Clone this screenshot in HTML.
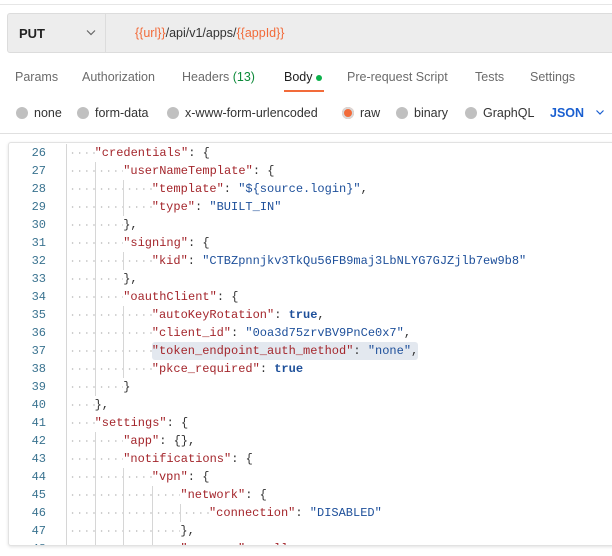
<!DOCTYPE html>
<html><head><style>
*{margin:0;padding:0;box-sizing:border-box}
body{width:612px;height:556px;background:#fff;font-family:"Liberation Sans",sans-serif;position:relative;overflow:hidden;color:#212121}
.abs{position:absolute}
.topline{left:0;right:0;top:4px;height:1px;background:#e6e6e6}
.url{left:7px;top:13px;width:620px;height:40px;background:#ededed;border:1px solid #dcdcdc;border-radius:3px}
.url .div{position:absolute;left:97px;top:0;bottom:0;width:1px;background:#dcdcdc}
.put{left:19px;top:26px;font-size:13px;font-weight:bold;color:#222}
.urltxt{left:135px;top:26px;font-size:12.5px;color:#333}
.o{color:#f26b3a}
.tabs{top:70px;font-size:12.5px;color:#6b6b6b}
.g{color:#0e8a3a}
.ul{left:242px;top:90px;width:34px;height:2px;background:#f26b3a}
.radio{top:106px;font-size:12.5px;color:#333;display:flex;align-items:center}
.rb{width:12px;height:12px;border-radius:50%;background:#c0c0c0;margin-right:6px}
.sep{left:0;right:0;top:133px;height:1px;background:#e0e0e0}
.editor{left:8px;top:142px;width:620px;height:404px;border:1px solid #e2e2e2;border-radius:3px;box-shadow:0 1px 3px rgba(0,0,0,.12);background:#fff;overflow:hidden}
.code{position:absolute;left:0;top:1px;font-family:"Liberation Mono",monospace;font-size:12px;}
.ln{position:relative;height:18px;line-height:18px;white-space:pre}
.num{position:absolute;left:0;width:37px;text-align:right;color:#3a7390;font-size:12px}
.in{position:absolute;left:57px;top:0;height:18px;display:flex}
.lv{width:28.6px;height:18px;border-left:1px solid #d6d6d6;background-image:radial-gradient(circle,#b8b8b8 0.7px,transparent 0.9px);background-size:7.15px 18px;background-position:2px 0}
.t{line-height:18px;color:#333}
.k{color:#a4262c}
.s{color:#1d4f9a}
.b{color:#1d4f9a;font-weight:bold}
.hl{background:#e3e8ef;border-radius:3px}
</style></head><body>
<div class="abs topline"></div>
<div class="abs url"><div class="div"></div></div>
<div class="abs put">PUT</div>
<svg class="abs" style="left:86px;top:29px" width="10" height="7" viewBox="0 0 10 7"><path d="M1 1.5l4 4 4-4" fill="none" stroke="#666" stroke-width="1.2"/></svg>
<div class="abs urltxt"><span class="o">{{url}}</span>/api/v1/apps/<span class="o">{{appId}}</span></div>

<div class="abs tabs" style="left:15px">Params</div>
<div class="abs tabs" style="left:82px">Authorization</div>
<div class="abs tabs" style="left:182px">Headers <span class="g">(13)</span></div>
<div class="abs tabs" style="left:284px;color:#212121">Body</div>
<div class="abs" style="left:316px;top:75px;width:6px;height:6px;border-radius:50%;background:#0cb14b"></div>
<div class="abs tabs" style="left:347px">Pre-request Script</div>
<div class="abs tabs" style="left:475px">Tests</div>
<div class="abs tabs" style="left:530px">Settings</div>
<div class="abs ul" style="left:284px;width:40px"></div>

<div class="abs radio" style="left:16px"><span class="rb"></span>none</div>
<div class="abs radio" style="left:77px"><span class="rb"></span>form-data</div>
<div class="abs radio" style="left:167px"><span class="rb"></span>x-www-form-urlencoded</div>
<div class="abs radio" style="left:342px"><span class="rb" style="background:#f26b3a;box-shadow:inset 0 0 0 2px #d8d8d8"></span>raw</div>
<div class="abs radio" style="left:396px"><span class="rb"></span>binary</div>
<div class="abs radio" style="left:465px"><span class="rb"></span>GraphQL</div>
<div class="abs radio" style="left:550px;color:#1a5fd0;font-weight:bold">JSON</div>
<svg class="abs" style="left:595px;top:109px" width="10" height="7" viewBox="0 0 10 7"><path d="M1.5 1.5l3.5 3.5 3.5-3.5" fill="none" stroke="#1a5fd0" stroke-width="1.2"/></svg>
<div class="abs sep"></div>

<div class="abs editor"><div class="code">
<div class="ln"><span class="num">26</span><div class="in"><span class="lv"></span><span class="t"><span class="k">"credentials"</span>: {</span></div></div>
<div class="ln"><span class="num">27</span><div class="in"><span class="lv"></span><span class="lv"></span><span class="t"><span class="k">"userNameTemplate"</span>: {</span></div></div>
<div class="ln"><span class="num">28</span><div class="in"><span class="lv"></span><span class="lv"></span><span class="lv"></span><span class="t"><span class="k">"template"</span>: <span class="s">"${source.login}"</span>,</span></div></div>
<div class="ln"><span class="num">29</span><div class="in"><span class="lv"></span><span class="lv"></span><span class="lv"></span><span class="t"><span class="k">"type"</span>: <span class="s">"BUILT_IN"</span></span></div></div>
<div class="ln"><span class="num">30</span><div class="in"><span class="lv"></span><span class="lv"></span><span class="t">},</span></div></div>
<div class="ln"><span class="num">31</span><div class="in"><span class="lv"></span><span class="lv"></span><span class="t"><span class="k">"signing"</span>: {</span></div></div>
<div class="ln"><span class="num">32</span><div class="in"><span class="lv"></span><span class="lv"></span><span class="lv"></span><span class="t"><span class="k">"kid"</span>: <span class="s">"CTBZpnnjkv3TkQu56FB9maj3LbNLYG7GJZjlb7ew9b8"</span></span></div></div>
<div class="ln"><span class="num">33</span><div class="in"><span class="lv"></span><span class="lv"></span><span class="t">},</span></div></div>
<div class="ln"><span class="num">34</span><div class="in"><span class="lv"></span><span class="lv"></span><span class="t"><span class="k">"oauthClient"</span>: {</span></div></div>
<div class="ln"><span class="num">35</span><div class="in"><span class="lv"></span><span class="lv"></span><span class="lv"></span><span class="t"><span class="k">"autoKeyRotation"</span>: <span class="b">true</span>,</span></div></div>
<div class="ln"><span class="num">36</span><div class="in"><span class="lv"></span><span class="lv"></span><span class="lv"></span><span class="t"><span class="k">"client_id"</span>: <span class="s">"0oa3d75zrvBV9PnCe0x7"</span>,</span></div></div>
<div class="ln"><span class="num">37</span><div class="in"><span class="lv"></span><span class="lv"></span><span class="lv"></span><span class="t hl"><span class="k">"token_endpoint_auth_method"</span>: <span class="s">"none"</span>,</span></div></div>
<div class="ln"><span class="num">38</span><div class="in"><span class="lv"></span><span class="lv"></span><span class="lv"></span><span class="t"><span class="k">"pkce_required"</span>: <span class="b">true</span></span></div></div>
<div class="ln"><span class="num">39</span><div class="in"><span class="lv"></span><span class="lv"></span><span class="t">}</span></div></div>
<div class="ln"><span class="num">40</span><div class="in"><span class="lv"></span><span class="t">},</span></div></div>
<div class="ln"><span class="num">41</span><div class="in"><span class="lv"></span><span class="t"><span class="k">"settings"</span>: {</span></div></div>
<div class="ln"><span class="num">42</span><div class="in"><span class="lv"></span><span class="lv"></span><span class="t"><span class="k">"app"</span>: {},</span></div></div>
<div class="ln"><span class="num">43</span><div class="in"><span class="lv"></span><span class="lv"></span><span class="t"><span class="k">"notifications"</span>: {</span></div></div>
<div class="ln"><span class="num">44</span><div class="in"><span class="lv"></span><span class="lv"></span><span class="lv"></span><span class="t"><span class="k">"vpn"</span>: {</span></div></div>
<div class="ln"><span class="num">45</span><div class="in"><span class="lv"></span><span class="lv"></span><span class="lv"></span><span class="lv"></span><span class="t"><span class="k">"network"</span>: {</span></div></div>
<div class="ln"><span class="num">46</span><div class="in"><span class="lv"></span><span class="lv"></span><span class="lv"></span><span class="lv"></span><span class="lv"></span><span class="t"><span class="k">"connection"</span>: <span class="s">"DISABLED"</span></span></div></div>
<div class="ln"><span class="num">47</span><div class="in"><span class="lv"></span><span class="lv"></span><span class="lv"></span><span class="lv"></span><span class="t">},</span></div></div>
<div class="ln"><span class="num">48</span><div class="in"><span class="lv"></span><span class="lv"></span><span class="lv"></span><span class="lv"></span><span class="t"><span class="k">"message"</span>: <span class="k">null</span>,</span></div></div>
</div></div>
</body></html>
